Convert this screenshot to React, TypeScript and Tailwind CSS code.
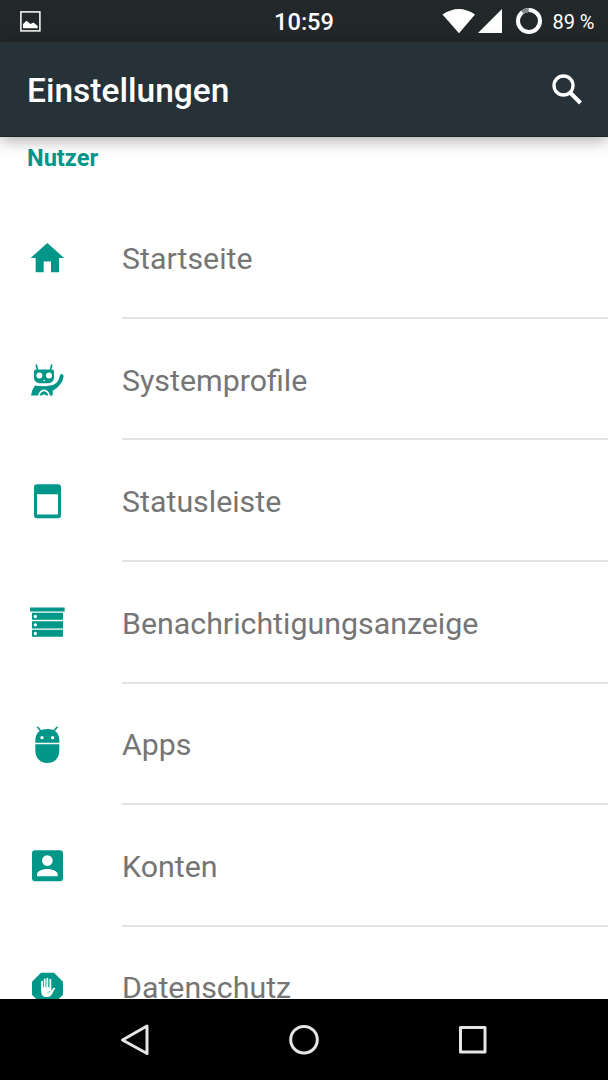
import type { ReactNode } from "react";

interface SettingsItem {
  id: string;
  label: string;
  viewBox: string;
  icon: ReactNode;
}

const items: SettingsItem[] = [
  {
    id: "home",
    label: "Startseite",
    viewBox: "27 29.25 108 108",
    icon: <path d="M82 38 L132 83 H117 V126 H93 V94 H71 V126 H47 V83 H32 Z" />,
  },
  {
    id: "profiles",
    label: "Systemprofile",
    viewBox: "27 34.5 108 108",
    icon: (
      <>
        <path
          d="M49 44 L53 59 M95 44 L91 59"
          fill="none"
          stroke="currentColor"
          strokeWidth="5"
          strokeLinecap="round"
        />
        <path d="M48 57 H96 Q102 57 102 64 V82 Q101 97 86 98 H58 Q43 97 42 82 V64 Q42 57 48 57 Z" />
        <path d="M120 75 Q121 70 126 71 Q131 72 131 77 Q127 104 98 121 L88 106 Q114 104 120 75 Z" />
        <path d="M45 105 Q72 109 94 105 L98 118 V135 H90 Q86 118 72 117 Q58 118 54 135 H33 Q34 119 45 105 Z" />
        <path d="M59 135 Q62 123 72 122 Q82 123 85 135 H80 Q72 129 64 135 Z" />
        <g fill="#fff">
          <circle cx="58" cy="75" r="9" />
          <circle cx="87" cy="75" r="9" />
          <circle cx="72.5" cy="90" r="2.5" />
        </g>
      </>
    ),
  },
  {
    id: "statusbar",
    label: "Statusleiste",
    viewBox: "27 38.25 108 108",
    icon: (
      <path
        fillRule="evenodd"
        d="M51 42 H114 Q123 42 123 51 V135 Q123 144 114 144 H51 Q42 144 42 135 V51 Q42 42 51 42 Z M51 72 V133 H114 V72 Z"
      />
    ),
  },
  {
    id: "drawer",
    label: "Benachrichtigungsanzeige",
    viewBox: "27 28.5 108 108",
    icon: (
      <>
        <path d="M30 36 H134 V48 H30 Z M36 52 H129 V73 H36 Z M36 77 H129 V99 H36 Z M36 103 H129 V124 H36 Z" />
        <g fill="#fff">
          <circle cx="46" cy="63" r="5" />
          <circle cx="46" cy="88" r="5" />
          <circle cx="46" cy="114" r="5" />
        </g>
      </>
    ),
  },
  {
    id: "apps",
    label: "Apps",
    viewBox: "27 33 108 108",
    icon: (
      <>
        <path
          d="M53 37 L63 49 M111 37 L101 49"
          fill="none"
          stroke="currentColor"
          strokeWidth="5"
          strokeLinecap="round"
        />
        <path d="M46 83 V77 Q46 43 82 42 Q118 43 118 77 V83 Z M46 88 H118 V108 C118 130 102 144 82 144 C62 144 46 130 46 108 Z" />
        <g fill="#fff">
          <circle cx="66" cy="68" r="5" />
          <circle cx="98" cy="68" r="5" />
        </g>
      </>
    ),
  },
  {
    id: "accounts",
    label: "Konten",
    viewBox: "27 38.25 108 108",
    icon: (
      <>
        <rect x="36" y="45" width="93" height="93" rx="9" />
        <g fill="#fff">
          <circle cx="82" cy="76" r="16" />
          <path d="M51 123 V117 C51 106 72 101 82 101 C93 101 113 106 113 117 V123 Z" />
        </g>
      </>
    ),
  },
  {
    id: "privacy",
    label: "Datenschutz",
    viewBox: "27 28 108 108",
    icon: (
      <>
        <path d="M63 36 H102 L129 63 V102 L102 129 H63 L36 102 V63 Z" />
        <path
          d="M66 63 V88 M74 56 V84 M82 54 V84 M91 57 V86"
          fill="none"
          stroke="#fff"
          strokeWidth="5.5"
          strokeLinecap="round"
        />
        <path
          fill="#fff"
          d="M63.3 80 H93.7 V90 L100 82 Q104 80 106 83 Q100 92 96 101 Q92 109 85 109 H75 Q66 108 64 97 Z"
        />
        <path d="M82 98 Q86 93 91 92" fill="none" stroke="currentColor" strokeWidth="2" />
      </>
    ),
  },
];

function StatusBar() {
  return (
    <div className="relative flex h-[42px] shrink-0 items-center justify-between bg-[#22272a] pr-[13.5px] pl-5 text-white">
      <svg className="h-[21px] w-[21px]" viewBox="0 0 21 21">
        <rect x="0.9" y="0.9" width="19" height="19" fill="none" stroke="#fff" strokeWidth="1.5" />
        <path fill="#fff" d="M3 17.3 V13 L6.5 9.8 L10.5 13 L13.5 11.5 L17.7 15 V17.3 Z" />
      </svg>
      <span className="absolute inset-x-0 top-px text-center text-[23.6px] font-medium leading-[42px]">
        10:59
      </span>
      <div className="flex items-center">
        <svg className="h-[42px] w-[104px]" viewBox="0 0 104 42">
          <path fill="#fff" d="M0.5 14.5 Q17 3.500 33 14.5 L17 33.3 Z" />
          <path fill="#fff" d="M60 9 V33 H36 Z" />
          <circle cx="87" cy="21" r="11" fill="none" stroke="#fff" strokeWidth="4" />
          <path d="M80.3 12.3 A11 11 0 0 1 86.8 10" fill="none" stroke="#858789" strokeWidth="4" />
        </svg>
        <span className="ml-[6px] pt-[2px] text-[20px] leading-[40px] whitespace-nowrap">89 %</span>
      </div>
    </div>
  );
}

function AppBar() {
  return (
    <header className="relative z-10 flex h-[95px] shrink-0 items-center justify-between border-b border-[#1b262b] bg-[#263238] pr-[25px] pl-[27px] text-white shadow-[0_3px_15px_rgba(0,0,0,0.35)]">
      <h1 className="pt-[5px] text-[33.5px] font-medium">Einstellungen</h1>
      <button aria-label="Suchen">
        <svg className="h-8 w-8" viewBox="0 0 32 32" fill="none" stroke="#fff">
          <circle cx="12.5" cy="12.5" r="9.5" strokeWidth="3.3" />
          <path d="M19.5 20 L29.5 30" strokeWidth="4" />
        </svg>
      </button>
    </header>
  );
}

function SettingsRow({ item, last }: { item: SettingsItem; last: boolean }) {
  return (
    <li className="flex h-[121.6px] shrink-0 pl-[29px]">
      <div className="flex w-[93px] shrink-0 items-center">
        <svg className="h-9 w-9 overflow-visible text-[#009688]" viewBox={item.viewBox} fill="currentColor">
          {item.icon}
        </svg>
      </div>
      <div
        className={`flex flex-1 items-center text-[30.35px] text-[#757575] ${
          last ? "pt-[1px]" : "border-b-2 border-[#e3e3e3] pt-[3.5px]"
        }`}
      >
        {item.label}
      </div>
    </li>
  );
}

function NavBar() {
  return (
    <nav className="flex h-[81px] shrink-0 items-center justify-center gap-[133px] bg-black">
      <svg className="h-9 w-9" viewBox="0 0 36 36" fill="none" stroke="#e6e6e6" strokeWidth="3" strokeLinejoin="round">
        <path d="M5.5 18 L30 4 V31.5 Z" />
      </svg>
      <svg className="h-9 w-9" viewBox="0 0 36 36" fill="none" stroke="#e6e6e6" strokeWidth="3">
        <circle cx="18" cy="17.7" r="13.3" />
      </svg>
      <svg className="h-9 w-9" viewBox="0 0 36 36" fill="none" stroke="#e6e6e6" strokeWidth="3" strokeLinejoin="round">
        <rect x="5.5" y="5.5" width="24.5" height="24.5" />
      </svg>
    </nav>
  );
}

export default function App() {
  return (
    <div className="flex h-[1080px] w-[608px] flex-col overflow-hidden bg-white font-['Roboto','Liberation_Sans',sans-serif]">
      <StatusBar />
      <AppBar />
      <main className="flex min-h-0 flex-1 flex-col overflow-hidden">
        <h2 className="h-[60.3px] shrink-0 pt-[3px] pl-[27px] text-[23.6px] leading-[36px] font-bold text-[#009688]">
          Nutzer
        </h2>
        <ul className="flex flex-col">
          {items.map((item, index) => (
            <SettingsRow key={item.id} item={item} last={index === items.length - 1} />
          ))}
        </ul>
      </main>
      <NavBar />
    </div>
  );
}
